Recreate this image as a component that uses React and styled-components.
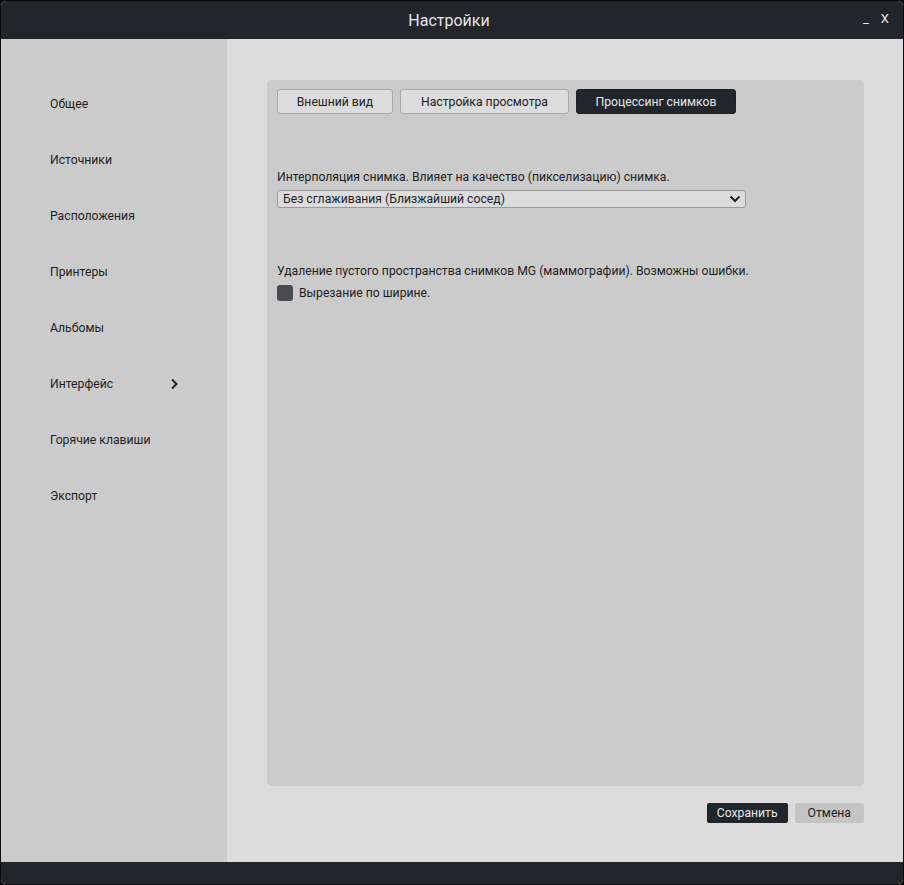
import styled, { createGlobalStyle } from 'styled-components';

const Global = createGlobalStyle`
  html, body { margin: 0; padding: 0; background: #000; }
  body { font-family: Roboto, "Liberation Sans", sans-serif; }
`;

const menu = ['Общее', 'Источники', 'Расположения', 'Принтеры', 'Альбомы', 'Интерфейс', 'Горячие клавиши', 'Экспорт'];
const tabs = ['Внешний вид', 'Настройка просмотра', 'Процессинг снимков'];

export default function App() {
  return (
    <>
      <Global />
      <Window>
        <TitleBar>
          <Title>Настройки</Title>
          <Controls>
            <span>_</span>
            <span>X</span>
          </Controls>
        </TitleBar>
        <Body>
          <Sidebar>
            {menu.map((m) => (
              <MenuItem key={m}>
                {m}
                {m === 'Интерфейс' && (
                  <svg width="8" height="12" viewBox="0 0 8 12">
                    <path d="M2 1.5 L6.5 6 L2 10.5" fill="none" stroke="#222" strokeWidth="2" />
                  </svg>
                )}
              </MenuItem>
            ))}
          </Sidebar>
          <Main>
            <Panel>
              <Tabs>
                {tabs.map((t, i) => (
                  <Tab key={t} $active={i === 2} $w={[116, 169, 160][i]}>{t}</Tab>
                ))}
              </Tabs>
              <Label>Интерполяция снимка. Влияет на качество (пикселизацию) снимка.</Label>
              <Select>
                <span>Без сглаживания (Близжайший сосед)</span>
                <svg width="12" height="8" viewBox="0 0 12 8">
                  <path d="M1.5 1.5 L6 6 L10.5 1.5" fill="none" stroke="#222" strokeWidth="2" />
                </svg>
              </Select>
              <Label $top={55}>Удаление пустого пространства снимков MG (маммографии). Возможны ошибки.</Label>
              <CheckRow>
                <Check />
                Вырезание по ширине.
              </CheckRow>
            </Panel>
            <Footer>
              <Button $primary>Сохранить</Button>
              <Button>Отмена</Button>
            </Footer>
          </Main>
        </Body>
        <BottomBar />
      </Window>
    </>
  );
}

const Window = styled.div`
  width: 904px;
  height: 885px;
  box-sizing: border-box;
  border: 1px solid #0a0a0a;
  border-radius: 6px;
  overflow: hidden;
  display: flex;
  flex-direction: column;
  background: #dcdcdc;
`;

const TitleBar = styled.div`
  height: 38px;
  flex: none;
  background: #21252c;
  position: relative;
  display: flex;
  align-items: center;
  justify-content: center;
`;

const Title = styled.div`
  color: #e6e6e6;
  font-size: 16px;
  margin-left: -6px;
`;

const Controls = styled.div`
  position: absolute;
  right: 14px;
  top: 10px;
  display: flex;
  gap: 12px;
  color: #e6e6e6;
  font-size: 13px;
`;

const Body = styled.div`
  flex: 1;
  display: flex;
  min-height: 0;
`;

const Sidebar = styled.div`
  width: 226px;
  flex: none;
  background: #cbcbcb;
  padding-top: 37px;
  box-sizing: border-box;
`;

const MenuItem = styled.div`
  height: 56px;
  display: flex;
  align-items: center;
  justify-content: space-between;
  padding: 0 49px 0 49px;
  font-size: 12.2px;
  color: #1e1e1e;
  box-sizing: border-box;
`;

const Main = styled.div`
  flex: 1;
  padding: 41px 39px 0 40px;
  display: flex;
  flex-direction: column;
`;

const Panel = styled.div`
  height: 706px;
  background: #cbcbcb;
  border-radius: 5px;
  padding: 9px 10px;
  box-sizing: border-box;
`;

const Tabs = styled.div`
  display: flex;
  gap: 7px;
`;

const Tab = styled.div`
  width: ${(p) => p.$w}px;
  height: 25px;
  box-sizing: border-box;
  display: flex;
  align-items: center;
  justify-content: center;
  border-radius: 3px;
  font-size: 12.2px;
  border: 1px solid ${(p) => (p.$active ? '#1e2228' : '#a9a9a9')};
  background: ${(p) => (p.$active ? '#21252c' : '#dcdcdc')};
  color: ${(p) => (p.$active ? '#e8e8e8' : '#222')};
`;

const Label = styled.div`
  margin-top: ${(p) => p.$top || 55}px;
  font-size: 12.2px;
  color: #1e1e1e;
  line-height: 16px;
`;

const Select = styled.div`
  margin-top: 5px;
  width: 469px;
  height: 18px;
  box-sizing: border-box;
  border: 1px solid #9a9a9a;
  border-radius: 3px;
  background: #dcdcdc;
  display: flex;
  align-items: center;
  justify-content: space-between;
  padding: 0 4px 0 5px;
  font-size: 12.2px;
  color: #1e1e1e;
`;

const CheckRow = styled.div`
  margin-top: 6px;
  display: flex;
  align-items: center;
  gap: 6px;
  font-size: 12.2px;
  color: #1e1e1e;
`;

const Check = styled.div`
  width: 16px;
  height: 16px;
  border-radius: 3px;
  background: #4a4a4f;
`;

const Footer = styled.div`
  display: flex;
  justify-content: flex-end;
  gap: 7px;
  margin-top: 17px;
`;

const Button = styled.div`
  height: 20px;
  padding: 0 ${(p) => (p.$primary ? 10 : 13)}px;
  display: flex;
  align-items: center;
  border-radius: 2px;
  font-size: 12.2px;
  background: ${(p) => (p.$primary ? '#21252c' : '#c4c4c4')};
  color: ${(p) => (p.$primary ? '#e8e8e8' : '#222')};
`;

const BottomBar = styled.div`
  height: 22px;
  flex: none;
  background: #21252c;
`;
